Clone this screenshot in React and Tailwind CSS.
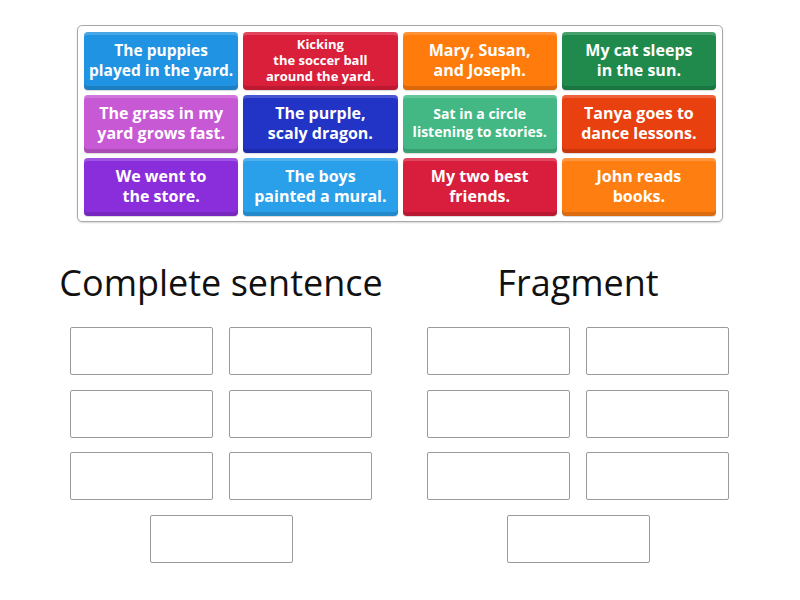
import React from "react";

// tiles waiting to be sorted
const tiles = [
  { text: ["The puppies", "played in the yard."], bg: "bg-[#2094e2]", size: "text-[15.5px] leading-[20px]" },
  { text: ["Kicking", "the soccer ball", "around the yard."], bg: "bg-[#da1f3b]", size: "text-[13px] leading-[16px]" },
  { text: ["Mary, Susan,", "and Joseph."], bg: "bg-[#ff7b0c]", size: "text-[16px] leading-[20px]" },
  { text: ["My cat sleeps", "in the sun."], bg: "bg-[#1f8a4b]", size: "text-[16px] leading-[20px]" },
  { text: ["The grass in my", "yard grows fast."], bg: "bg-[#c759d5]", size: "text-[16px] leading-[20px]" },
  { text: ["The purple,", "scaly dragon."], bg: "bg-[#2234c6]", size: "text-[16px] leading-[20px]" },
  { text: ["Sat in a circle", "listening to stories."], bg: "bg-[#43b884]", size: "text-[14px] leading-[18px]" },
  { text: ["Tanya goes to", "dance lessons."], bg: "bg-[#e9400f]", size: "text-[16px] leading-[20px]" },
  { text: ["We went to", "the store."], bg: "bg-[#8a2edc]", size: "text-[16px] leading-[20px]" },
  { text: ["The boys", "painted a mural."], bg: "bg-[#2aa0ea]", size: "text-[16px] leading-[20px]" },
  { text: ["My two best", "friends."], bg: "bg-[#d91e3d]", size: "text-[16px] leading-[20px]" },
  { text: ["John reads", "books."], bg: "bg-[#ff7e12]", size: "text-[16px] leading-[20px]" },
];

const Tile = ({ tile }) => (
  <div
    className={`${tile.bg} ${tile.size} h-[58px] rounded-[4px] flex flex-col items-center justify-center pb-[3px] font-bold text-white text-center shadow-[inset_0_3px_0_rgba(255,255,255,0.18),inset_0_-4px_0_rgba(0,0,0,0.14),0_1px_1px_rgba(0,0,0,0.15)]`}
  >
    {tile.text.map((line) => (
      <span key={line} className="whitespace-nowrap">
        {line}
      </span>
    ))}
  </div>
);

const DropBox = () => (
  <div className="w-[143px] h-[48px] border border-[#9a9a9a] rounded-[2px] bg-white"></div>
);

const Group = ({ title }) => (
  <div className="w-[302px] flex flex-col items-center">
    <h2 className="text-[36px] leading-[48px] text-[#111] font-normal mb-[20px] whitespace-nowrap">
      {title}
    </h2>
    <div className="grid grid-cols-2 gap-x-[16px] gap-y-[14.5px]">
      {[0, 1, 2, 3, 4, 5].map((i) => (
        <DropBox key={i} />
      ))}
    </div>
    <div className="mt-[14.5px]">
      <DropBox />
    </div>
  </div>
);

export default function App() {
  return (
    <div className="w-[800px] h-[600px] bg-white overflow-hidden font-['Open_Sans',sans-serif]">
      <div className="pt-[25px] flex justify-center">
        <div className="w-[646px] border border-[#a8a8a8] rounded-[5px] px-[6px] pt-[6px] pb-[5px] shadow-[0_1px_2px_rgba(0,0,0,0.15)]">
          <div className="grid grid-cols-4 gap-x-[5px] gap-y-[5px]">
            {tiles.map((t) => (
              <Tile key={t.text.join(" ")} tile={t} />
            ))}
          </div>
        </div>
      </div>
      <div className="mt-[37px] flex justify-center gap-[55px] pr-[1px]">
        <Group title="Complete sentence" />
        <Group title="Fragment" />
      </div>
    </div>
  );
}
